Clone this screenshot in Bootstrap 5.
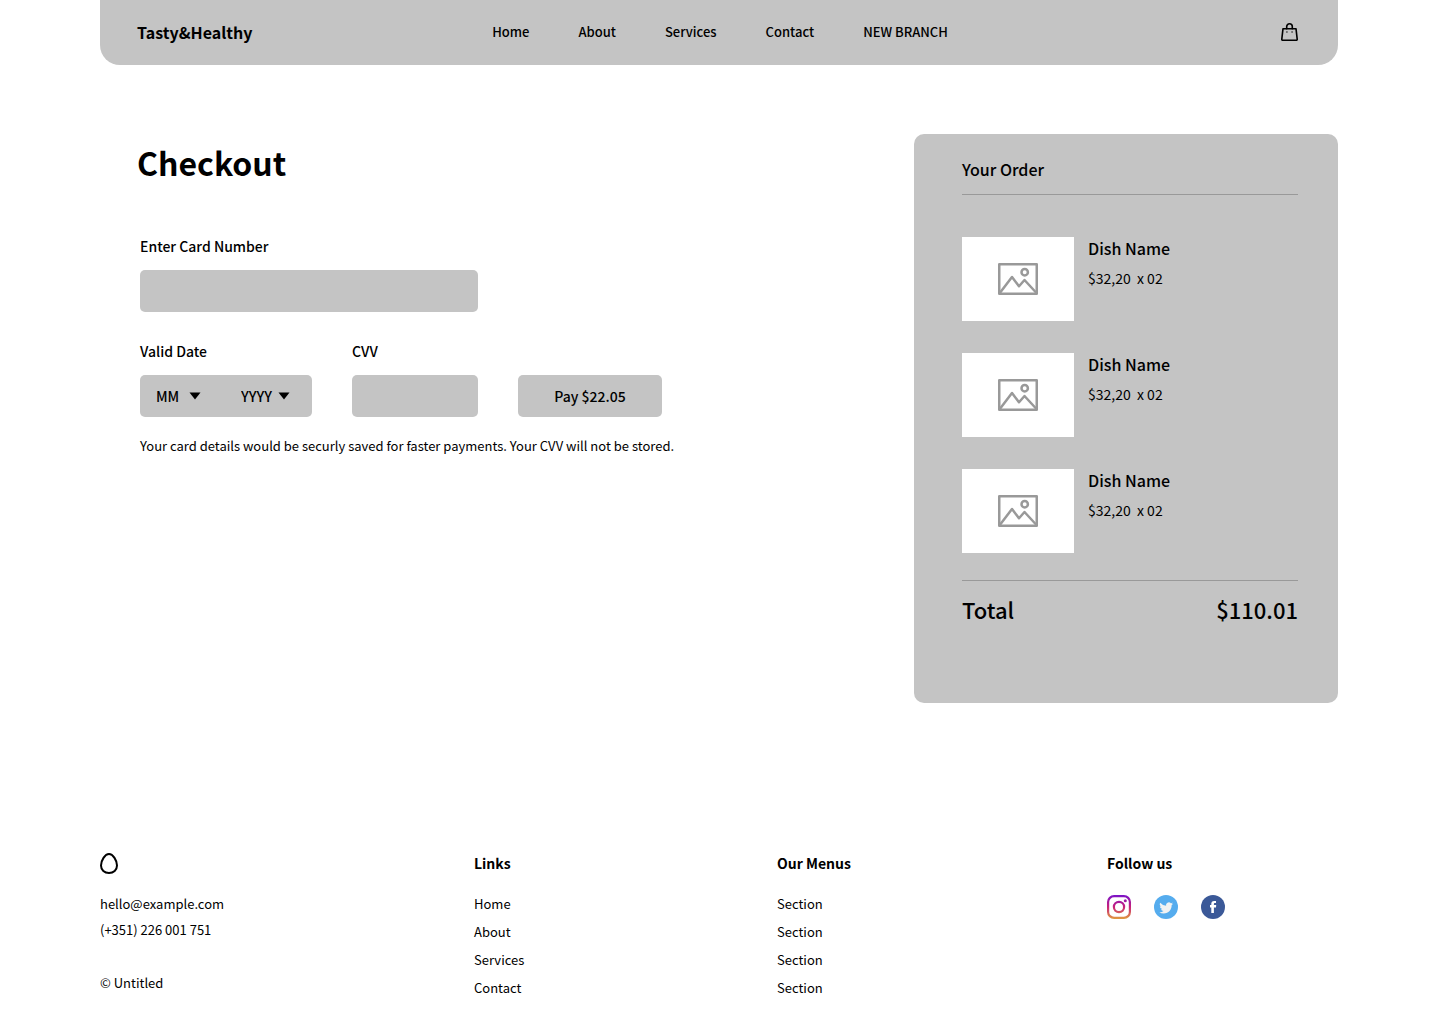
<!DOCTYPE html>
<html lang="en">
<head>
<meta charset="utf-8">
<meta name="viewport" content="width=device-width, initial-scale=1">
<title>Tasty&amp;Healthy – Checkout</title>
<link href="https://cdn.jsdelivr.net/npm/bootstrap@5.3.0/dist/css/bootstrap.min.css" rel="stylesheet">
<style>
  :root { --panel: #c4c4c4; --rule: #999; }
  body { font-family: "Noto Sans CJK SC", "Noto Sans", sans-serif; font-size: 13px; line-height: 20px; color: #000; background: #fff; }
  a { color: inherit; text-decoration: none; }
  svg { display: block; flex: none; }
  .page-shell { padding: 0 102px 0 100px; }
  .top-bar { display: grid; grid-template-columns: 357fr auto 352fr; align-items: center; min-height: 65px; padding: 0 40px 2px 37px; background: var(--panel); border-radius: 0 0 20px 20px; }
  .brand-name { font-size: 16px; }
  .top-links { gap: 49px; }
  .medium { font-weight: 500; }
  .checkout-main { padding-top: 69px; gap: 40px; }
  .checkout-form { padding-left: 40px; }
  .page-title { font-size: 32px; line-height: 40px; font-weight: 700; margin: 8px 0 54px -3px; }
  .field-label { display: block; font-size: 14px; line-height: 20px; font-weight: 500; margin-bottom: 14px; }
  .field-box, .field-box:focus { height: 42px; border: 0; border-radius: 5px; background: var(--panel); color: #000; font-size: 14px; font-weight: 500; }
  .card-field { margin-bottom: 29px; }
  .card-number { width: 338px; }
  .date-box { width: 172px; padding-left: 16px; gap: 40px; }
  .cvv-box { width: 126px; }
  .btn.pay-button { width: 144px; }
  .date-select { appearance: none; border: 0; padding: 0; height: 42px; color: #000; font: inherit; background: url("data:image/svg+xml,%3Csvg xmlns='http://www.w3.org/2000/svg' viewBox='0 0 12 8'%3E%3Cpath d='M.5.5h11L6 7.500z'/%3E%3C/svg%3E") no-repeat right center / 12px 8px; }
  .month-select { width: 45px; }
  .year-select { width: 49px; }
  .form-row { gap: 40px; }
  .save-note { margin: 19px 0 0; }
  .order-panel { width: 424px; padding: 23px 40px 78px 48px; background: var(--panel); border-radius: 10px; }
  .order-title { font-size: 16px; line-height: 24px; padding-bottom: 13px; border-bottom: 1px solid var(--rule); margin-bottom: 42px; }
  .order-items { gap: 32px; margin-bottom: 27px; }
  .order-line { gap: 14px; }
  .thumb { width: 112px; height: 84px; background: #fff; }
  .dish-name { font-size: 16px; line-height: 22px; margin-bottom: 9px; }
  .dish-price { font-size: 14px; line-height: 20px; white-space: pre; }
  .order-total { border-top: 1px solid var(--rule); padding-top: 12px; font-size: 22px; line-height: 32px; }
  .site-footer { display: grid; grid-template-columns: 374fr 303fr 330fr 231fr; padding-top: 150px; }
  .footer-title { font-size: 14px; line-height: 20px; font-weight: 700; margin-bottom: 21px; }
  .footer-links { gap: 8px; }
  .footer-logo { margin-bottom: 19px; }
  .contact-lines { gap: 6px; margin-bottom: 33px; }
  .socials { gap: 23px; padding-top: 1px; }
</style>
<script src="https://cdn.jsdelivr.net/npm/bootstrap@5.3.0/dist/js/bootstrap.bundle.min.js" defer></script>
</head>
<body>
<svg width="0" height="0" class="position-absolute" aria-hidden="true">
  <symbol id="picture" viewBox="0 0 40 32">
    <g fill="none" stroke="#999" stroke-width="2.500" stroke-linejoin="round">
      <rect x="1.250" y="1.250" width="37.500" height="29.500"/>
      <circle cx="26.700" cy="9.200" r="3.200"/>
      <path d="M1.800 30 14 14l7 9.300 5.500-6.300L38.500 30"/>
    </g>
  </symbol>
</svg>
<div class="page-shell">
  <header class="top-bar">
    <a href="#" class="brand-name fw-bold">Tasty&amp;Healthy</a>
    <nav class="top-links d-flex medium" aria-label="Main">
      <a href="#">Home</a><a href="#">About</a><a href="#">Services</a><a href="#">Contact</a><a href="#">NEW BRANCH</a>
    </nav>
    <a href="#" class="ms-auto" aria-label="Cart">
      <svg width="17" height="18" viewBox="0 0 17 18" fill="none" stroke="#000" stroke-width="1.600" stroke-linejoin="round" stroke-linecap="round">
        <path d="M2 5.700h13l1.200 10.400q.1 1.100-1 1.100H1.800q-1.100 0-1-1.100z"/>
        <path d="M5.700 5.700V3.600a2.800 2.800 0 0 1 5.600 0v2.100"/>
        <path d="M5.800 9h.2M11 9h.2" stroke="#666" stroke-width="1.800"/>
      </svg>
    </a>
  </header>

  <main class="checkout-main d-flex justify-content-between align-items-start">
    <form class="checkout-form">
      <h1 class="page-title">Checkout</h1>
      <div class="card-field">
        <label class="field-label" for="card">Enter Card Number</label>
        <input id="card" class="form-control field-box card-number" type="text" inputmode="numeric">
      </div>
      <div class="form-row d-flex align-items-end">
        <div>
          <label class="field-label" for="month">Valid Date</label>
          <div class="field-box date-box d-flex">
            <select id="month" class="date-select month-select"><option>MM</option></select>
            <select class="date-select year-select" aria-label="Year"><option>YYYY</option></select>
          </div>
        </div>
        <div>
          <label class="field-label" for="cvv">CVV</label>
          <input id="cvv" class="form-control field-box cvv-box" type="text" inputmode="numeric">
        </div>
        <button type="button" class="btn field-box pay-button p-0">Pay $22.05</button>
      </div>
      <p class="save-note">Your card details would be securly saved for faster payments. Your CVV will not be stored.</p>
    </form>

    <section class="order-panel flex-shrink-0">
      <h2 class="order-title medium">Your Order</h2>
      <div class="order-items d-flex flex-column">
        <article class="order-line d-flex">
          <div class="thumb d-flex align-items-center justify-content-center"><svg width="40" height="32"><use href="#picture"/></svg></div>
          <div><h3 class="dish-name medium">Dish Name</h3><div class="dish-price">$32,20  x 02</div></div>
        </article>
        <article class="order-line d-flex">
          <div class="thumb d-flex align-items-center justify-content-center"><svg width="40" height="32"><use href="#picture"/></svg></div>
          <div><h3 class="dish-name medium">Dish Name</h3><div class="dish-price">$32,20  x 02</div></div>
        </article>
        <article class="order-line d-flex">
          <div class="thumb d-flex align-items-center justify-content-center"><svg width="40" height="32"><use href="#picture"/></svg></div>
          <div><h3 class="dish-name medium">Dish Name</h3><div class="dish-price">$32,20  x 02</div></div>
        </article>
      </div>
      <div class="order-total d-flex justify-content-between medium"><span>Total</span><span>$110.01</span></div>
    </section>
  </main>

  <footer class="site-footer">
    <div>
      <svg class="footer-logo" width="18" height="22" viewBox="0 0 18 22" fill="none" stroke="#000" stroke-width="2"><path d="M9 1C13 1 17 7.500 17 12.500 17 17 13.500 20 9 20S1 17 1 12.500C1 7.500 5 1 9 1z"/></svg>
      <div class="contact-lines d-flex flex-column align-items-start">
        <a href="#">hello@example.com</a>
        <span>(+351) 226 001 751</span>
      </div>
      <div>© Untitled</div>
    </div>
    <nav aria-label="Links">
      <h2 class="footer-title">Links</h2>
      <div class="footer-links d-flex flex-column align-items-start">
        <a href="#">Home</a><a href="#">About</a><a href="#">Services</a><a href="#">Contact</a>
      </div>
    </nav>
    <nav aria-label="Menus">
      <h2 class="footer-title">Our Menus</h2>
      <div class="footer-links d-flex flex-column align-items-start">
        <a href="#">Section</a><a href="#">Section</a><a href="#">Section</a><a href="#">Section</a>
      </div>
    </nav>
    <div>
      <h2 class="footer-title">Follow us</h2>
      <div class="socials d-flex">
        <a href="#" aria-label="Instagram">
          <svg width="24" height="24" viewBox="0 0 24 24" fill="none">
            <defs><linearGradient id="insta" gradientUnits="userSpaceOnUse" x1="12" y1="0" x2="12" y2="24"><stop offset="0" stop-color="#7a12c9"/><stop offset=".5" stop-color="#c8217a"/><stop offset="1" stop-color="#e09b3d"/></linearGradient></defs>
            <rect x="1.100" y="1.100" width="21.800" height="21.800" rx="6" stroke="url(#insta)" stroke-width="2.200"/>
            <circle cx="12" cy="12" r="5.100" stroke="url(#insta)" stroke-width="2.200"/>
            <circle cx="18.300" cy="5.700" r="1.500" fill="url(#insta)"/>
          </svg>
        </a>
        <a href="#" aria-label="Twitter">
          <svg width="24" height="24" viewBox="0 0 24 24"><circle cx="12" cy="12" r="12" fill="#55acee"/>
            <path fill="#f1f2f2" transform="translate(5.300 5.600) scale(.86)" d="M5.026 15c6.038 0 9.341-5.003 9.341-9.334q.002-.211-.006-.422A6.700 6.700 0 0 0 16 3.542a6.700 6.700 0 0 1-1.889.518 3.300 3.300 0 0 0 1.447-1.817 6.500 6.500 0 0 1-2.087.793A3.286 3.286 0 0 0 7.875 6.030a9.320 9.320 0 0 1-6.767-3.429 3.290 3.290 0 0 0 1.018 4.382A3.300 3.300 0 0 1 .64 6.575v.045a3.290 3.290 0 0 0 2.632 3.218 3.200 3.200 0 0 1-.865.115 3 3 0 0 1-.614-.057 3.280 3.280 0 0 0 3.067 2.277A6.600 6.600 0 0 1 .78 13.580a6 6 0 0 1-.78-.045A9.340 9.340 0 0 0 5.026 15"/></svg>
        </a>
        <a href="#" aria-label="Facebook">
          <svg width="24" height="24" viewBox="0 0 24 24"><circle cx="12" cy="12" r="12" fill="#3b5998"/>
            <path fill="#fff" d="M15 12.400h-2.100V18h-2.600v-5.600H9V10h1.300V8.700c0-1.700.9-2.800 2.800-2.800H15v2.200h-1.300c-.6 0-.8.3-.8.900v1h2.300z"/></svg>
        </a>
      </div>
    </div>
  </footer>
</div>
</body>
</html>
